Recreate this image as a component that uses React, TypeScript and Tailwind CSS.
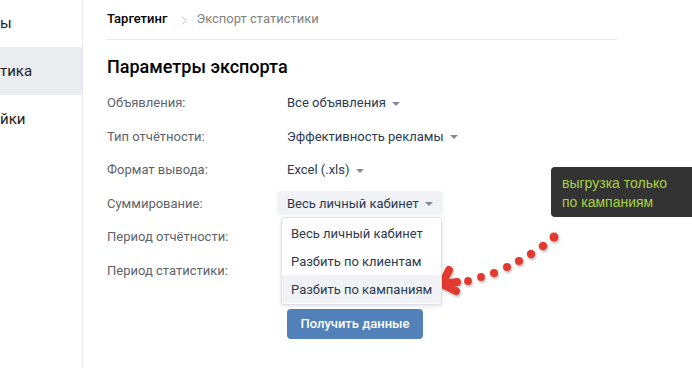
import React from "react";

const rows = [
  { label: "Объявления:", value: "Все объявления" },
  { label: "Тип отчётности:", value: "Эффективность рекламы" },
  { label: "Формат вывода:", value: "Excel (.xls)" },
  { label: "Суммирование:", value: "Весь личный кабинет", open: true },
  { label: "Период отчётности:", value: "" },
  { label: "Период статистики:", value: "" },
];

const options = ["Весь личный кабинет", "Разбить по клиентам", "Разбить по кампаниям"];

function Caret() {
  return (
    <svg width="8" height="4" viewBox="0 0 8 4" className="ml-[6px] mt-[2px] shrink-0">
      <path d="M0 0 L8 0 L4 4 Z" fill="#828a99" />
    </svg>
  );
}

function Arrow() {
  const dots = [
    [554, 237, 4.5],
    [543, 246, 4.3],
    [531, 254, 4.2],
    [519, 261, 4.1],
    [507, 267, 4],
    [494, 273, 4],
    [481, 277, 3.9],
    [468, 281, 3.9],
  ];
  return (
    <svg className="absolute left-0 top-0 pointer-events-none" width="692" height="368">
      <g style={{ filter: "drop-shadow(1px 2px 1px rgba(0,0,0,0.25))" }}>
        {dots.map((d, i) => (
          <circle key={i} cx={d[0]} cy={d[1]} r={d[2]} fill="#e23a30" />
        ))}
        <path
          d="M449 270 L442 284 L456 291 M443 284 L457 282"
          fill="none"
          stroke="#e23a30"
          strokeWidth="8"
          strokeLinecap="round"
          strokeLinejoin="round"
        />
      </g>
    </svg>
  );
}

export default function App() {
  return (
    <div className="relative w-[692px] h-[368px] bg-white overflow-hidden flex font-['Roboto',sans-serif]">
      {/* sidebar */}
      <div className="w-[83px] shrink-0 border-r border-[#e7e8ec] text-[15px] text-[#222]">
        <div className="h-[47px] flex items-center">ы</div>
        <div className="h-[48px] flex items-center bg-[#ebedf0]">тика</div>
        <div className="h-[48px] flex items-center">йки</div>
      </div>

      {/* main */}
      <div className="pl-[24px] w-[534px]">
        <div className="h-[40px] flex items-center text-[13px] border-b border-[#e7e8ec] pb-[1px]">
          <span className="font-medium text-black">Таргетинг</span>
          <svg width="6" height="9" viewBox="0 0 6 9" className="ml-[14px] mr-[9px] mt-[3px]">
            <path d="M1 0.5 L5 4.5 L1 8.5" fill="none" stroke="#b5bdc7" strokeWidth="1" />
          </svg>
          <span className="text-[#828282]">Экспорт статистики</span>
        </div>

        <div className="h-[46px] pt-[13px] text-[18px] font-medium text-black">Параметры экспорта</div>

        <div className="flex flex-col">
          {rows.map((r) => (
            <div key={r.label} className="h-[33.5px] flex items-center text-[13px] whitespace-nowrap">
              <div className="w-[170px] text-[#5f6369]">{r.label}</div>
              {r.value && (
                <div
                  className={
                    "relative h-[24px] px-[10px] flex items-center rounded-[4px] text-[#2b3a50] " +
                    (r.open ? "bg-[#f0f2f5]" : "")
                  }
                >
                  {r.value}
                  <Caret />
                  {r.open && (
                    <div className="absolute left-[4px] top-[26px] w-[161px] bg-white border border-[#dfe2e8] rounded-[3px] shadow-[0_1px_4px_rgba(0,0,0,0.12)] py-[1px] z-10">
                      {options.map((o, i) => (
                        <div
                          key={o}
                          className={
                            "h-[28px] px-[9px] flex items-center whitespace-nowrap text-[#2b3a50] " +
                            (i === 2 ? "bg-[#f0f2f5]" : "")
                          }
                        >
                          {o}
                        </div>
                      ))}
                    </div>
                  )}
                </div>
              )}
            </div>
          ))}
        </div>

        <div className="pl-[180px] pt-[22px]">
          <button className="w-[136px] h-[30px] rounded-[4px] bg-[#5181b8] text-white text-[13px] font-medium">
            Получить данные
          </button>
        </div>
      </div>

      <div className="absolute left-[551px] top-[167px] w-[141px] h-[50px] rounded-l-[4px] bg-[#333333] pl-[11px] pt-[7px] text-[14px] leading-[19px] text-[#a8d145] font-['Liberation_Sans',sans-serif]">
        <div>выгрузка только</div>
        <div>по кампаниям</div>
      </div>

      <Arrow />
    </div>
  );
}
